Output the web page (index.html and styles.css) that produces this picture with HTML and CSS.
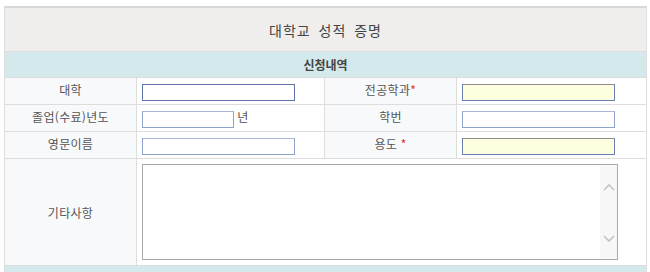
FILE: index.html
```html
<!DOCTYPE html>
<html lang="ko">
<head>
    <meta charset="UTF-8">
    <title>대학교 성적 증명</title>
    <link rel="stylesheet" href="styles.css">
</head>
<body>

    <div class="wrap">
        <table class="form-table">
            <colgroup>
                <col class="col-label">
                <col class="col-field">
                <col class="col-label">
                <col class="col-field-r">
            </colgroup>
            <tr>
                <th colspan="4" class="title">대학교 성적 증명</th>
            </tr>
            <tr>
                <th colspan="4" class="section">신청내역</th>
            </tr>
            <tr>
                <td class="label">대학</td>
                <td class="field"><input type="text" class="txt focus"></td>
                <td class="label">전공학과<span class="req">*</span></td>
                <td class="field"><input type="text" class="txt need"></td>
            </tr>
            <tr>
                <td class="label">졸업(수료)년도</td>
                <td class="field"><input type="text" class="txt short"> 년</td>
                <td class="label">학번</td>
                <td class="field"><input type="text" class="txt"></td>
            </tr>
            <tr>
                <td class="label">영문이름</td>
                <td class="field"><input type="text" class="txt"></td>
                <td class="label">용도 <span class="req">*</span></td>
                <td class="field"><input type="text" class="txt need"></td>
            </tr>
            <tr>
                <td class="label memo">기타사항</td>
                <td colspan="3" class="field">
                    <div class="memo-box">
                        <textarea class="memo-text"></textarea>
                        <div class="scroll">
                            <svg width="12" height="8" viewBox="0 0 12 8"><path d="M1 7 L6 2 L11 7" fill="none" stroke="#c4c4c4" stroke-width="1.6"/></svg>
                            <svg width="12" height="8" viewBox="0 0 12 8"><path d="M1 1 L6 6 L11 1" fill="none" stroke="#c4c4c4" stroke-width="1.6"/></svg>
                        </div>
                    </div>
                </td>
            </tr>
            <tr>
                <td colspan="4" class="next"></td>
            </tr>
        </table>
    </div>

</body>
</html>
```

FILE: styles.css
```css
body {
    font-family: "Noto Sans CJK KR", "Noto Sans", sans-serif;
    font-size: 12px;
    color: #555;
    margin: 0;
    padding: 0;
    background: #fff;
}
.wrap {
    padding: 6px 5px 0 4px;
}
.form-table {
    width: 642px;
    border-collapse: collapse;
    table-layout: fixed;
    border-top: 2px solid #d8d8d8;
}
.col-label {
    width: 132px;
}
.col-field {
    width: 188px;
}
.col-field-r {
    width: 190px;
}
.form-table th, .form-table td {
    border: 1px solid #dddddd;
    padding: 0;
}
.title {
    height: 43px;
    background-color: #efeeec;
    font-size: 14px;
    font-weight: normal;
    letter-spacing: 1px;
    word-spacing: 3px;
    color: #444;
}
.section {
    height: 25px;
    background-color: #d4e9ec;
    font-size: 12px;
    font-weight: bold;
    color: #444;
}
.label {
    height: 23px;
    padding-bottom: 3px !important;
    background-color: #f8f9fb;
    text-align: center;
    letter-spacing: 0.3px;
}
.field {
    padding-left: 5px !important;
    background: #fff;
}
.req {
    color: #e03030;
}
.txt {
    box-sizing: border-box;
    width: 153px;
    height: 17px;
    margin: 0;
    padding: 0 2px;
    border: 1px solid #8ea2cc;
    border-top-color: #a9b6d6;
    vertical-align: middle;
    font-size: 12px;
}
.txt.focus {
    border-color: #5d72a8;
}
.txt.short {
    width: 92px;
}
.txt.need {
    background-color: #fdfede;
    border-color: #6a80b4;
    border-top-color: #8d8d8d;
}
.label.memo {
    height: 106px;
    padding-bottom: 0 !important;
}
.memo-box {
    display: flex;
    width: 474px;
    height: 94px;
    border: 1px solid #a8a8a8;
    background: #fff;
}
.memo-text {
    flex: 1;
    border: none;
    resize: none;
    outline: none;
    margin: 0;
}
.scroll {
    width: 17px;
    background: #f7f7f7;
    display: flex;
    flex-direction: column;
    justify-content: space-between;
    align-items: center;
    padding: 18px 0 16px;
}
.next {
    height: 6px;
    background-color: #d4e9ec;
}
```
